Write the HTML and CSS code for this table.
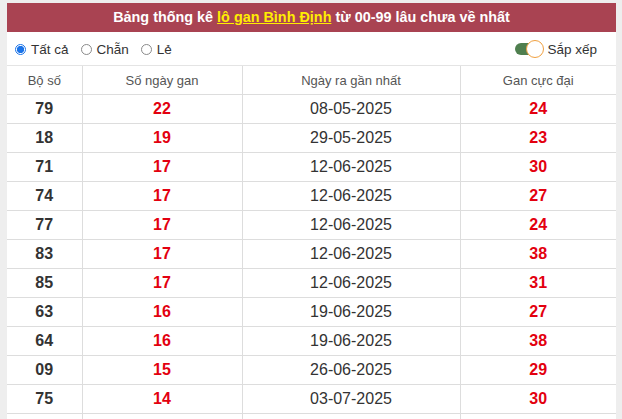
FILE: index.html
```html
<!DOCTYPE html>
<html lang="vi">
<head>
<meta charset="utf-8">
<link rel="stylesheet" href="styles.css">
</head>
<body>
<div class="box">
  <div class="title">Bảng thống kê <a href="#">lô gan Bình Định</a> từ 00-99 lâu chưa về nhất</div>
  <div class="filters">
    <div class="radios">
      <label class="radio"><span class="dot on"></span>Tất cả</label>
      <label class="radio"><span class="dot"></span>Chẵn</label>
      <label class="radio"><span class="dot"></span>Lẻ</label>
    </div>
    <div class="sort"><span class="toggle"><span class="knob"></span></span>Sắp xếp</div>
  </div>
  <table class="stats">
    <colgroup><col class="c1"><col class="c2"><col class="c3"><col class="c4"></colgroup>
    <thead>
      <tr><th>Bộ số</th><th>Số ngày gan</th><th>Ngày ra gần nhất</th><th>Gan cực đại</th></tr>
    </thead>
    <tbody>
      <tr><td class="num">79</td><td class="red">22</td><td>08-05-2025</td><td class="red">24</td></tr>
      <tr><td class="num">18</td><td class="red">19</td><td>29-05-2025</td><td class="red">23</td></tr>
      <tr><td class="num">71</td><td class="red">17</td><td>12-06-2025</td><td class="red">30</td></tr>
      <tr><td class="num">74</td><td class="red">17</td><td>12-06-2025</td><td class="red">27</td></tr>
      <tr><td class="num">77</td><td class="red">17</td><td>12-06-2025</td><td class="red">24</td></tr>
      <tr><td class="num">83</td><td class="red">17</td><td>12-06-2025</td><td class="red">38</td></tr>
      <tr><td class="num">85</td><td class="red">17</td><td>12-06-2025</td><td class="red">31</td></tr>
      <tr><td class="num">63</td><td class="red">16</td><td>19-06-2025</td><td class="red">27</td></tr>
      <tr><td class="num">64</td><td class="red">16</td><td>19-06-2025</td><td class="red">38</td></tr>
      <tr><td class="num">09</td><td class="red">15</td><td>26-06-2025</td><td class="red">29</td></tr>
      <tr><td class="num">75</td><td class="red">14</td><td>03-07-2025</td><td class="red">30</td></tr>
      <tr><td class="num">&nbsp;</td><td class="red">&nbsp;</td><td>&nbsp;</td><td class="red">&nbsp;</td></tr>
    </tbody>
  </table>
</div>
</body>
</html>
```
FILE: styles.css
```css
html, body { margin: 0; padding: 0; }
body {
  background: #eeeeee;
  font-family: "Liberation Sans", Arial, sans-serif;
  color: #333;
  padding: 3px 6px 0 7px;
  height: 419px;
  overflow: hidden;
  box-sizing: border-box;
}
.box {
  background: #fff;
  width: 609px;
}
.title {
  background: #a94352;
  color: #fff;
  font-weight: bold;
  font-size: 14.4px;
  text-align: center;
  height: 29px;
  line-height: 29px;
}
.title a { color: #ffee00; text-decoration: underline; }
.filters {
  display: flex;
  justify-content: space-between;
  align-items: center;
  height: 32px;
  padding: 1px 19px 0 8px;
  border-bottom: 1px solid #e4e4e4;
  font-size: 13.5px;
  color: #333;
}
.radios { display: flex; gap: 12px; align-items: center; }
.radio { display: flex; align-items: center; gap: 5px; }
.dot {
  width: 11px; height: 11px;
  border: 1px solid #8a8a8a;
  border-radius: 50%;
  box-sizing: border-box;
  display: inline-block;
}
.dot.on {
  border: 1px solid #1a73e8;
  background: radial-gradient(circle, #1a73e8 0 3.4px, #fff 3.9px);
}
.sort { display: flex; align-items: center; gap: 3px; }
.toggle {
  position: relative;
  display: inline-block;
  width: 26px; height: 12px;
  background: #4f7f4f;
  border-radius: 6px;
  margin-right: 3px;
}
.knob {
  position: absolute;
  right: -3px; top: -3px;
  width: 18px; height: 18px;
  border-radius: 50%;
  background: #fff;
  border: 1.5px solid #f0a040;
  box-sizing: border-box;
}
.stats {
  width: 609px;
  border-collapse: collapse;
  table-layout: fixed;
}
.c1 { width: 75px; }
.c2 { width: 160px; }
.c3 { width: 218px; }
.c4 { width: 156px; }
.stats th, .stats td {
  height: 28px;
  padding: 0;
  text-align: center;
  border-bottom: 1px solid #dddddd;
  border-left: 1px solid #dddddd;
}
.stats th:first-child, .stats td:first-child { border-left: none; }
.stats th {
  font-weight: normal;
  color: #555;
  font-size: 13px;
}
.stats td { font-size: 16px; color: #333; }
.stats td.num { font-weight: bold; color: #333; }
.stats td.red { font-weight: bold; color: #e3000f; }
```
